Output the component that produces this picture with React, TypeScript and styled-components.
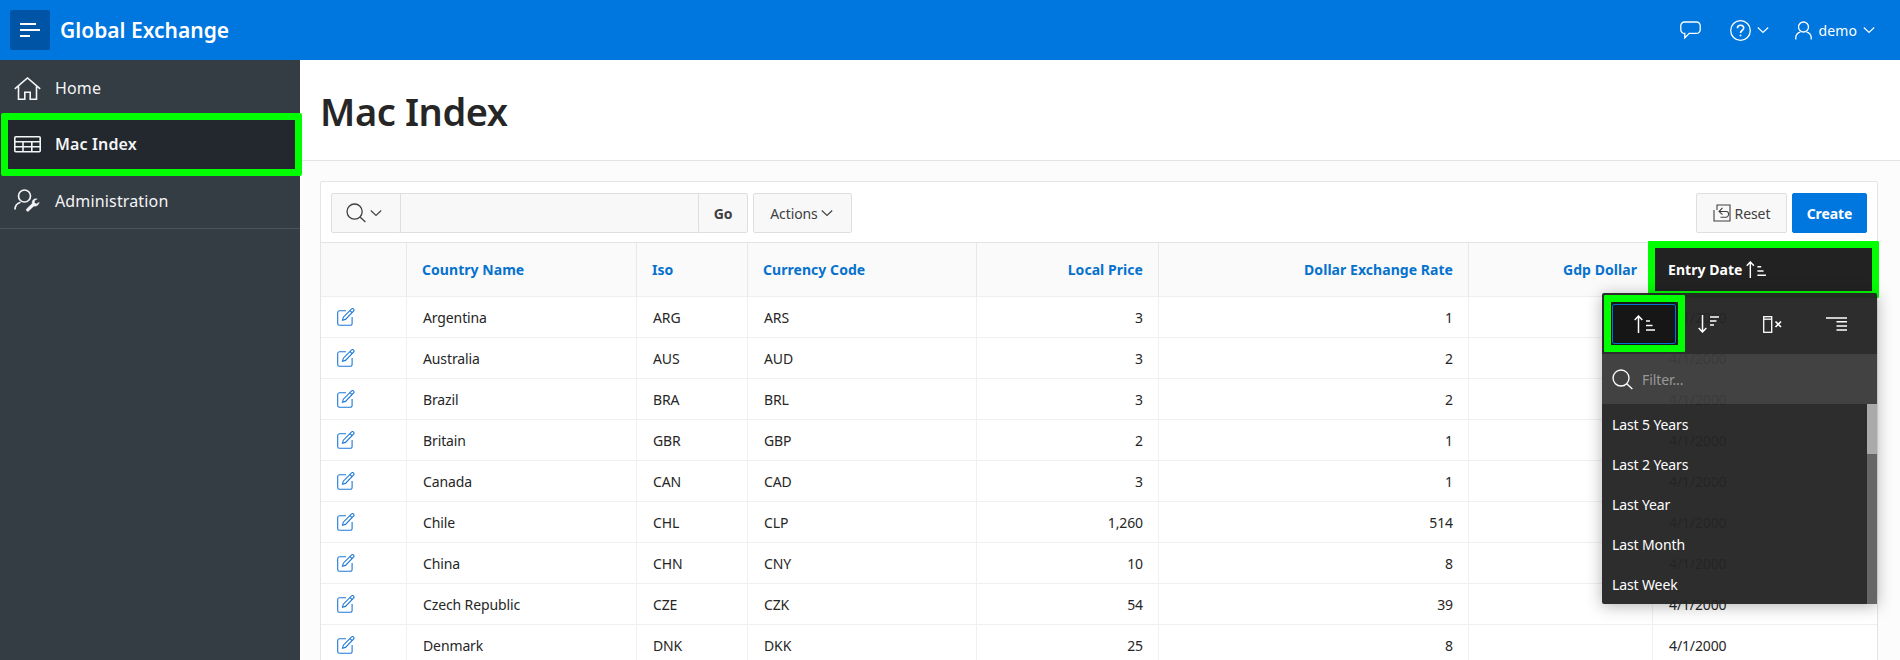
import styled, { createGlobalStyle } from 'styled-components';

const GlobalStyle = createGlobalStyle`
  html, body {
    margin: 0;
    padding: 0;
    background: #fcfcfc;
    font-family: "Noto Sans", "Open Sans", sans-serif;
    font-size: 14px;
    color: #262626;
  }
  * {
    box-sizing: border-box;
  }
`;

const Page = styled.div`
  display: flex;
  flex-direction: column;
  height: 660px;
  overflow: hidden;
`;

const TopBar = styled.header`
  display: flex;
  align-items: center;
  flex: none;
  height: 60px;
  padding: 0 25px 0 10px;
  background: #0076df;
  color: #fff;
`;

const MenuToggle = styled.div`
  display: flex;
  align-items: center;
  justify-content: center;
  width: 40px;
  height: 40px;
  border-radius: 2px;
  background: #0054a6;
`;

const AppName = styled.div`
  flex: 1;
  margin-left: 10px;
  font-size: 21px;
  font-weight: 600;
`;

const TopActions = styled.div`
  display: flex;
  align-items: center;
`;

const TopAction = styled.div<{ $gap: number }>`
  display: flex;
  align-items: center;
  gap: 6px;
  margin-right: ${(p) => p.$gap}px;
`;

const UserName = styled.span`
  margin-left: 1px;
  font-size: 14px;
  letter-spacing: 0.1px;
`;

const Body = styled.div`
  display: flex;
  flex: 1;
  min-height: 0;
`;

const SideNav = styled.nav`
  flex: none;
  width: 300px;
  background: #343c44;
  color: #f4f5f6;
`;

const NavList = styled.div`
  border-bottom: 1px solid #4a525a;
`;

const NavItem = styled.div<{ $active?: boolean }>`
  position: relative;
  display: flex;
  align-items: center;
  height: 56px;
  padding-left: 14px;
  gap: 14px;
  font-size: 16px;
  letter-spacing: 0.15px;
  font-weight: ${(p) => (p.$active ? 600 : 400)};
  background: ${(p) => (p.$active ? '#22282e' : 'transparent')};
  &:last-child {
    padding-top: 2px;
  }
`;

const NavHighlight = styled.div`
  position: absolute;
  left: 1px;
  top: -3px;
  width: 301px;
  height: 63px;
  border: 7px solid #00ff00;
  border-radius: 2px;
  pointer-events: none;
`;

const Main = styled.main`
  display: flex;
  flex-direction: column;
  flex: 1;
  min-width: 0;
`;

const TitleBar = styled.div`
  display: flex;
  align-items: center;
  flex: none;
  height: 101px;
  padding: 2px 0 0 20px;
  background: #fff;
  border-bottom: 1px solid #e4e4e4;
`;

const PageTitle = styled.h1`
  margin: 0;
  font-size: 38px;
  font-weight: 600;
  letter-spacing: -0.4px;
  color: #262626;
`;

const Content = styled.div`
  padding: 20px 22px 0 20px;
`;

const Card = styled.section`
  position: relative;
  background: #fff;
  border: 1px solid #e4e4e4;
  border-radius: 2px;
`;

const Toolbar = styled.div`
  display: flex;
  align-items: flex-start;
  gap: 5px;
  height: 61px;
  padding: 11px 10px 0;
  border-bottom: 1px solid #e4e4e4;
`;

const ToolButton = styled.div<{ $width: number; $primary?: boolean; $bold?: boolean }>`
  display: flex;
  align-items: center;
  justify-content: center;
  gap: 4px;
  flex: none;
  width: ${(p) => p.$width}px;
  height: 40px;
  border: 1px solid ${(p) => (p.$primary ? '#0076df' : '#dfdfdf')};
  border-radius: 2px;
  background: ${(p) => (p.$primary ? '#0076df' : '#f8f8f8')};
  color: ${(p) => (p.$primary ? '#fff' : '#404040')};
  font-weight: ${(p) => (p.$bold || p.$primary ? 700 : 400)};
  letter-spacing: -0.1px;
`;

const SearchToggle = styled(ToolButton)`
  padding-right: 4px;
`;

const ActionsButton = styled(ToolButton)`
  padding-right: 2px;
  gap: 3px;
`;

const SearchGroup = styled.div`
  display: flex;
`;

const SearchField = styled.div`
  width: 299px;
  height: 40px;
  margin: 0 -1px;
  border: 1px solid #dfdfdf;
  background: #f8f8f8;
`;

const ToolbarSpacer = styled.div`
  flex: 1;
`;

const Table = styled.table`
  width: 100%;
  table-layout: fixed;
  border-collapse: separate;
  border-spacing: 0;
`;

const Column = styled.col<{ $width?: number }>`
  width: ${(p) => (p.$width ? `${p.$width}px` : 'auto')};
`;

const HeadCell = styled.th<{ $right?: boolean; $active?: boolean }>`
  height: 54px;
  padding: 0 15px;
  text-align: ${(p) => (p.$right ? 'right' : 'left')};
  font-weight: 700;
  font-size: 14px;
  letter-spacing: 0.05px;
  color: ${(p) => (p.$active ? '#fff' : '#0572ce')};
  background: ${(p) => (p.$active ? '#222' : '#fafafa')};
  border-right: 1px solid #e8e8e8;
  border-bottom: 1px solid #eee;
  &:last-child {
    border-right: 0;
  }
`;

const HeadInner = styled.span`
  display: inline-flex;
  align-items: center;
  gap: 4px;
`;

const Cell = styled.td<{ $right?: boolean }>`
  height: 41px;
  padding: 0 15px 0 16px;
  text-align: ${(p) => (p.$right ? 'right' : 'left')};
  font-size: 14px;
  letter-spacing: -0.12px;
  border-right: 1px solid #f0f0f0;
  border-bottom: 1px solid #f0f0f0;
  &:last-child {
    border-right: 0;
  }
`;

const EditLink = styled.div`
  display: flex;
  color: #1d78d8;
`;

const ColumnHighlight = styled.div`
  position: absolute;
  left: 1327px;
  top: 59px;
  width: 231px;
  height: 57px;
  border: 7px solid #00ff00;
  border-radius: 1px;
  pointer-events: none;
`;

const ColumnMenu = styled.div`
  position: absolute;
  left: 1281px;
  top: 111px;
  width: 275px;
  height: 311px;
  display: flex;
  flex-direction: column;
  background: rgba(36, 36, 36, 0.96);
  color: #fff;
  border-radius: 2px;
  box-shadow: 0 2px 16px rgba(0, 0, 0, 0.3);
`;

const SortRow = styled.div`
  display: grid;
  grid-template-columns: repeat(4, 64px);
  flex: none;
  height: 61px;
  padding: 11px 10px 0;
`;

const SortButton = styled.div<{ $active?: boolean }>`
  position: relative;
  display: flex;
  align-items: center;
  justify-content: center;
  height: 40px;
  border-radius: 2px;
  border: 1px solid ${(p) => (p.$active ? '#0572ce' : 'transparent')};
  background: ${(p) => (p.$active ? '#161616' : 'transparent')};
  outline: ${(p) => (p.$active ? '2px solid #161616' : 'none')};
`;

const SortHighlight = styled.div`
  position: absolute;
  left: -9px;
  top: -10px;
  width: 81px;
  height: 57px;
  border: 7px solid #00ff00;
  border-radius: 1px;
  pointer-events: none;
`;

const FilterRow = styled.div`
  display: flex;
  align-items: center;
  gap: 9px;
  flex: none;
  height: 50px;
  padding-left: 10px;
  background: rgba(255, 255, 255, 0.1);
  color: #999;
  letter-spacing: -0.1px;
`;

const FilterIcon = styled.span`
  display: flex;
  color: #fff;
`;

const ValueArea = styled.div`
  position: relative;
  flex: 1;
  min-height: 0;
  overflow: hidden;
`;

const ValueItem = styled.div`
  display: flex;
  align-items: center;
  height: 40px;
  padding-left: 10px;
  letter-spacing: -0.12px;
`;

const ScrollTrack = styled.div`
  position: absolute;
  top: 0;
  right: 0;
  bottom: 0;
  width: 10px;
  background: #666;
`;

const ScrollThumb = styled.div`
  height: 50px;
  background: #aaa;
`;

const Chevron = ({ size = 12 }: { size?: number }) => (
  <svg width={size} height={size} viewBox="0 0 12 12" fill="none" stroke="currentColor" strokeWidth="1.1">
    <path d="M.8 3.5 6 8.5l5.2-5" />
  </svg>
);

const SearchIcon = ({ size = 20 }: { size?: number }) => (
  <svg width={size} height={size} viewBox="0 0 20 20" fill="none" stroke="currentColor" strokeWidth="1.3">
    <circle cx="8.6" cy="8.6" r="7.6" />
    <path d="m14 14 5.4 5" />
  </svg>
);

const SortAscIcon = ({ width = 21, height = 18 }: { width?: number; height?: number }) => (
  <svg width={width} height={height} viewBox="0 0 21 18" fill="none" stroke="currentColor" strokeWidth="1.5">
    <path d="M4.5 18V1M.7 5 4.5 1l3.8 4M12 6h4M12 10.5h6.5M12 15h9" />
  </svg>
);

const SortDescIcon = () => (
  <svg width="21" height="18" viewBox="0 0 21 18" fill="none" stroke="currentColor" strokeWidth="1.5">
    <path d="M4.5 0v17M.7 13l3.8 4 3.8-4M12 2h9M12 6h6.5M12 10h4" />
  </svg>
);

const HideColumnIcon = () => (
  <svg width="19" height="17" viewBox="0 0 19 17" fill="none" stroke="currentColor" strokeWidth="1.3">
    <rect x=".7" y=".7" width="8" height="15.6" />
    <path d="M.7 3.2h8" />
    <path d="m12.5 5.5 5.5 5.5m0-5.5L12.5 11" strokeWidth="1.6" />
  </svg>
);

const BreakIcon = () => (
  <svg width="21" height="14" viewBox="0 0 21 14" fill="none" stroke="currentColor" strokeWidth="1.6">
    <path d="M0 1h21M10.5 4.8H21M10.5 9H21M10.5 13H21" />
  </svg>
);

const EditIcon = () => (
  <svg width="18" height="18" viewBox="0 0 18 18" fill="none" stroke="currentColor" strokeWidth="1.1">
    <path d="M9 2.8H2.4A1.8 1.8 0 0 0 .7 4.6v10.900a1.8 1.8 0 0 0 1.7 1.8h10.900a1.8 1.8 0 0 0 1.8-1.8V9" />
    <path d="M14.6.9a1.5 1.5 0 0 1 2.1 2.1l-8.2 8.400-3 .9.8-3.1Z" />
    <path d="m13 2.6 2.1 2.1" />
  </svg>
);

const countries = [
  ['Argentina', 'ARG', 'ARS', '3', '1'],
  ['Australia', 'AUS', 'AUD', '3', '2'],
  ['Brazil', 'BRA', 'BRL', '3', '2'],
  ['Britain', 'GBR', 'GBP', '2', '1'],
  ['Canada', 'CAN', 'CAD', '3', '1'],
  ['Chile', 'CHL', 'CLP', '1,260', '514'],
  ['China', 'CHN', 'CNY', '10', '8'],
  ['Czech Republic', 'CZE', 'CZK', '54', '39'],
  ['Denmark', 'DNK', 'DKK', '25', '8'],
];

const ranges = ['Last 5 Years', 'Last 2 Years', 'Last Year', 'Last Month', 'Last Week'];

export default function App() {
  return (
    <Page>
      <GlobalStyle />
      <TopBar>
        <MenuToggle>
          <svg width="20" height="16" viewBox="0 0 20 16" fill="none" stroke="#fff" strokeWidth="2">
            <path d="M0 2h16M0 8h20M0 14h10" />
          </svg>
        </MenuToggle>
        <AppName>Global Exchange</AppName>
        <TopActions>
          <TopAction $gap={29}>
            <svg width="21" height="19" viewBox="0 0 21 19" fill="none" stroke="currentColor" strokeWidth="1.3">
              <path d="M4.5 1h12a3.6 3.6 0 0 1 3.7 3.6v4.2a3.6 3.6 0 0 1-3.7 3.6H9.2l-4.4 4.6v-4.6h-.3A3.6 3.6 0 0 1 .8 8.8V4.6A3.6 3.6 0 0 1 4.5 1Z" />
            </svg>
          </TopAction>
          <TopAction $gap={26}>
            <svg width="21" height="21" viewBox="0 0 21 21" fill="none" stroke="currentColor" strokeWidth="1.3">
              <circle cx="10.5" cy="10.5" r="9.8" />
              <path d="M7.4 8.2c0-1.8 1.4-3 3.2-3s3.1 1.1 3.1 2.8c0 2.5-3.2 2.5-3.2 4.9" strokeWidth="1.6" />
              <circle cx="10.5" cy="15.4" r=".6" strokeWidth="1" />
            </svg>
            <Chevron />
          </TopAction>
          <TopAction $gap={0}>
            <svg width="17" height="19" viewBox="0 0 17 19" fill="none" stroke="currentColor" strokeWidth="1.3">
              <circle cx="8.5" cy="6" r="5" />
              <path d="M.8 18.5v-2.200c0-2.600 2.400-5 4.600-5.200M16.200 18.500v-2.200c0-2.600-2.400-5-4.600-5.200" />
            </svg>
            <UserName>demo</UserName>
            <Chevron />
          </TopAction>
        </TopActions>
      </TopBar>
      <Body>
        <SideNav>
          <NavList>
            <NavItem>
              <svg width="27" height="23" viewBox="0 0 27 23" fill="none" stroke="currentColor" strokeWidth="1.6">
                <path d="M.8 11.8 13.5 1l12.7 10.8M4.5 9.5v12.7h6.3v-7h5.400v7h6.300V9.500" />
              </svg>
              Home
            </NavItem>
            <NavItem $active>
              <NavHighlight />
              <svg width="27" height="17" viewBox="0 0 27 17" fill="none" stroke="currentColor" strokeWidth="1.6">
                <rect x=".8" y=".8" width="25.4" height="15" rx="1" />
                <path d="M.8 5.8h25.400M.8 10.800h25.400M9 5.800v10M17.800 5.800v10" />
              </svg>
              Mac Index
            </NavItem>
            <NavItem>
              <svg width="27" height="25" viewBox="0 0 27 25" fill="none" stroke="currentColor" strokeWidth="1.7">
                <circle cx="10.5" cy="7" r="6" />
                <path d="M1 20.5c0-3.800 2.500-6.400 5.500-7.300" />
                <path
                  d="m14 22.5 6-5.600c2.300.9 4.800-.8 5.200-3.600l-2.800 1.600-2-1.100.2-2.400 2.600-1.300c-2.800-1-5.600 1.200-5 4.400l-5.700 5.500a1.700 1.700 0 0 0 1.500 2.500Z"
                  fill="currentColor"
                  strokeWidth=".4"
                />
              </svg>
              Administration
            </NavItem>
          </NavList>
        </SideNav>
        <Main>
          <TitleBar>
            <PageTitle>Mac Index</PageTitle>
          </TitleBar>
          <Content>
            <Card>
              <Toolbar>
                <SearchGroup>
                  <SearchToggle $width={70}>
                    <SearchIcon />
                    <Chevron />
                  </SearchToggle>
                  <SearchField />
                  <ToolButton $width={50} $bold>
                    Go
                  </ToolButton>
                </SearchGroup>
                <ActionsButton $width={99}>
                  Actions
                  <Chevron />
                </ActionsButton>
                <ToolbarSpacer />
                <ToolButton $width={91}>
                  <svg width="18" height="18" viewBox="0 0 18 18" fill="none" stroke="currentColor" strokeWidth="1.1">
                    <path d="M4 6V1h13v16H1V6" />
                    <path d="M9.5 3.8 6 7.500l3.500 3.200M6 7.500h7.500c2.500 0 3 4.700.1 5.700H7.500" />
                  </svg>
                  Reset
                </ToolButton>
                <ToolButton $width={75} $primary>
                  Create
                </ToolButton>
              </Toolbar>
              <Table>
                <colgroup>
                  <Column $width={86} />
                  <Column $width={230} />
                  <Column $width={111} />
                  <Column $width={229} />
                  <Column $width={182} />
                  <Column $width={310} />
                  <Column $width={184} />
                  <Column />
                </colgroup>
                <thead>
                  <tr>
                    <HeadCell />
                    <HeadCell>Country Name</HeadCell>
                    <HeadCell>Iso</HeadCell>
                    <HeadCell>Currency Code</HeadCell>
                    <HeadCell $right>Local Price</HeadCell>
                    <HeadCell $right>Dollar Exchange Rate</HeadCell>
                    <HeadCell $right>Gdp Dollar</HeadCell>
                    <HeadCell $active>
                      <HeadInner>
                        Entry Date
                        <SortAscIcon width={20} height={17} />
                      </HeadInner>
                    </HeadCell>
                  </tr>
                </thead>
                <tbody>
                  {countries.map(([name, iso, code, price, rate]) => (
                    <tr key={iso}>
                      <Cell>
                        <EditLink>
                          <EditIcon />
                        </EditLink>
                      </Cell>
                      <Cell>{name}</Cell>
                      <Cell>{iso}</Cell>
                      <Cell>{code}</Cell>
                      <Cell $right>{price}</Cell>
                      <Cell $right>{rate}</Cell>
                      <Cell />
                      <Cell>4/1/2000</Cell>
                    </tr>
                  ))}
                </tbody>
              </Table>
              <ColumnHighlight />
              <ColumnMenu>
                <SortRow>
                  <SortButton $active>
                    <SortHighlight />
                    <SortAscIcon />
                  </SortButton>
                  <SortButton>
                    <SortDescIcon />
                  </SortButton>
                  <SortButton>
                    <HideColumnIcon />
                  </SortButton>
                  <SortButton>
                    <BreakIcon />
                  </SortButton>
                </SortRow>
                <FilterRow>
                  <FilterIcon>
                    <SearchIcon size={21} />
                  </FilterIcon>
                  Filter...
                </FilterRow>
                <ValueArea>
                  {ranges.map((range) => (
                    <ValueItem key={range}>{range}</ValueItem>
                  ))}
                  <ScrollTrack>
                    <ScrollThumb />
                  </ScrollTrack>
                </ValueArea>
              </ColumnMenu>
            </Card>
          </Content>
        </Main>
      </Body>
    </Page>
  );
}
